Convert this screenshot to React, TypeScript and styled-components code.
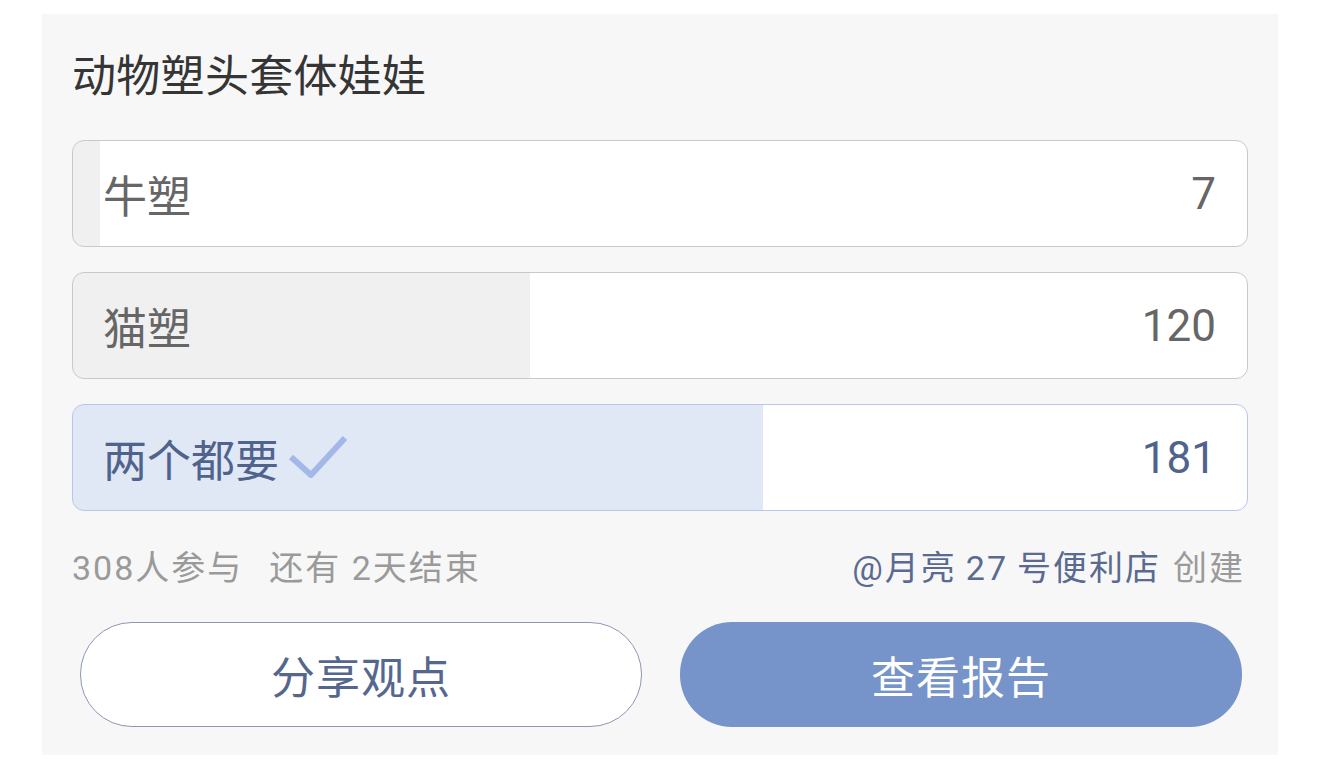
import React from "react";
import styled, { createGlobalStyle } from "styled-components";

const GlobalStyle = createGlobalStyle`
  html, body {
    margin: 0;
    padding: 0;
    background: #ffffff;
  }
  body {
    font-family: Roboto, "Noto Sans CJK SC", "Noto Sans", sans-serif;
    -webkit-font-smoothing: antialiased;
  }
`;

const Page = styled.div`
  padding: 14px 42px 5px 42px;
`;

const Card = styled.section`
  box-sizing: border-box;
  width: 1236px;
  height: 741px;
  background: #f7f7f7;
  padding: 32px 30px 28px 30px;
  display: flex;
  flex-direction: column;
`;

const Title = styled.h1`
  margin: 0 0 32px 0;
  font-size: 44px;
  line-height: 62px;
  font-weight: 400;
  color: #353535;
  letter-spacing: 0.3px;
`;

const Options = styled.div`
  display: flex;
  flex-direction: column;
  gap: 25px;
`;

const Row = styled.div<{ $pct: number; $selected?: boolean }>`
  box-sizing: border-box;
  height: 107px;
  display: flex;
  align-items: center;
  justify-content: space-between;
  padding: 0 31px 0 30px;
  border-radius: 12px;
  border: 1px solid ${(p) => (p.$selected ? "#b9c6e8" : "#c9c9c9")};
  background: ${(p) => {
    const fill = p.$selected ? "#e0e8f6" : "#f0f0f0";
    return `linear-gradient(to right, ${fill} 0, ${fill} ${p.$pct}%, #ffffff ${p.$pct}%, #ffffff 100%)`;
  }};
  color: ${(p) => (p.$selected ? "#4f638c" : "#666666")};
  font-size: 44px;
`;

const Label = styled.span`
  display: flex;
  align-items: center;
  gap: 10px;
`;

const Count = styled.span`
  font-family: Roboto, sans-serif;
  font-size: 44px;
`;

const Check = styled.svg`
  width: 58px;
  height: 46px;
  margin-top: 0px;
`;

const Meta = styled.div`
  margin-top: 35px;
  display: flex;
  justify-content: space-between;
  align-items: center;
  font-size: 34px;
  line-height: 44px;
  letter-spacing: 2px;
  color: #9a9a9a;
  padding-right: 3px;
`;

const MetaGroup = styled.div`
  display: flex;
  align-items: center;
  gap: 26px;
`;

const Creator = styled.span`
  color: #5a6a90;
`;

const Muted = styled.span`
  color: #9a9a9a;
  margin-left: 12px;
`;

const Actions = styled.div`
  margin: 32px 6px 0 8px;
  display: grid;
  grid-template-columns: 1fr 1fr;
  gap: 38px;
`;

const Button = styled.button<{ $primary?: boolean }>`
  box-sizing: border-box;
  height: 105px;
  border-radius: 52px;
  font-family: "Noto Sans CJK SC", sans-serif;
  font-size: 44px;
  letter-spacing: 1px;
  cursor: pointer;
  border: ${(p) => (p.$primary ? "none" : "1.5px solid #8d97b5")};
  background: ${(p) => (p.$primary ? "#7694c9" : "#ffffff")};
  color: ${(p) => (p.$primary ? "#ffffff" : "#56678e")};
`;

const total = 308;
const options = [
  { label: "牛塑", count: 7 },
  { label: "猫塑", count: 120 },
  { label: "两个都要", count: 181, selected: true },
];

export default function App() {
  return (
    <>
      <GlobalStyle />
      <Page>
        <Card>
          <Title>动物塑头套体娃娃</Title>
          <Options>
            {options.map((o) => (
              <Row
                key={o.label}
                $pct={(o.count / total) * 100}
                $selected={o.selected}
              >
                <Label>
                  {o.label}
                  {o.selected && (
                    <Check viewBox="0 0 58 46">
                      <path
                        d="M2 22 L22 40 L56 3"
                        fill="none"
                        stroke="#a3b8e8"
                        strokeWidth="6"
                        strokeLinecap="butt"
                        strokeLinejoin="round"
                      />
                    </Check>
                  )}
                </Label>
                <Count>{o.count}</Count>
              </Row>
            ))}
          </Options>
          <Meta>
            <MetaGroup>
              <span>308人参与</span>
              <span>还有 2天结束</span>
            </MetaGroup>
            <span>
              <Creator>@月亮{"\u2009"}27{"\u2009"}号便利店</Creator>
              <Muted>创建</Muted>
            </span>
          </Meta>
          <Actions>
            <Button>分享观点</Button>
            <Button $primary>查看报告</Button>
          </Actions>
        </Card>
      </Page>
    </>
  );
}
